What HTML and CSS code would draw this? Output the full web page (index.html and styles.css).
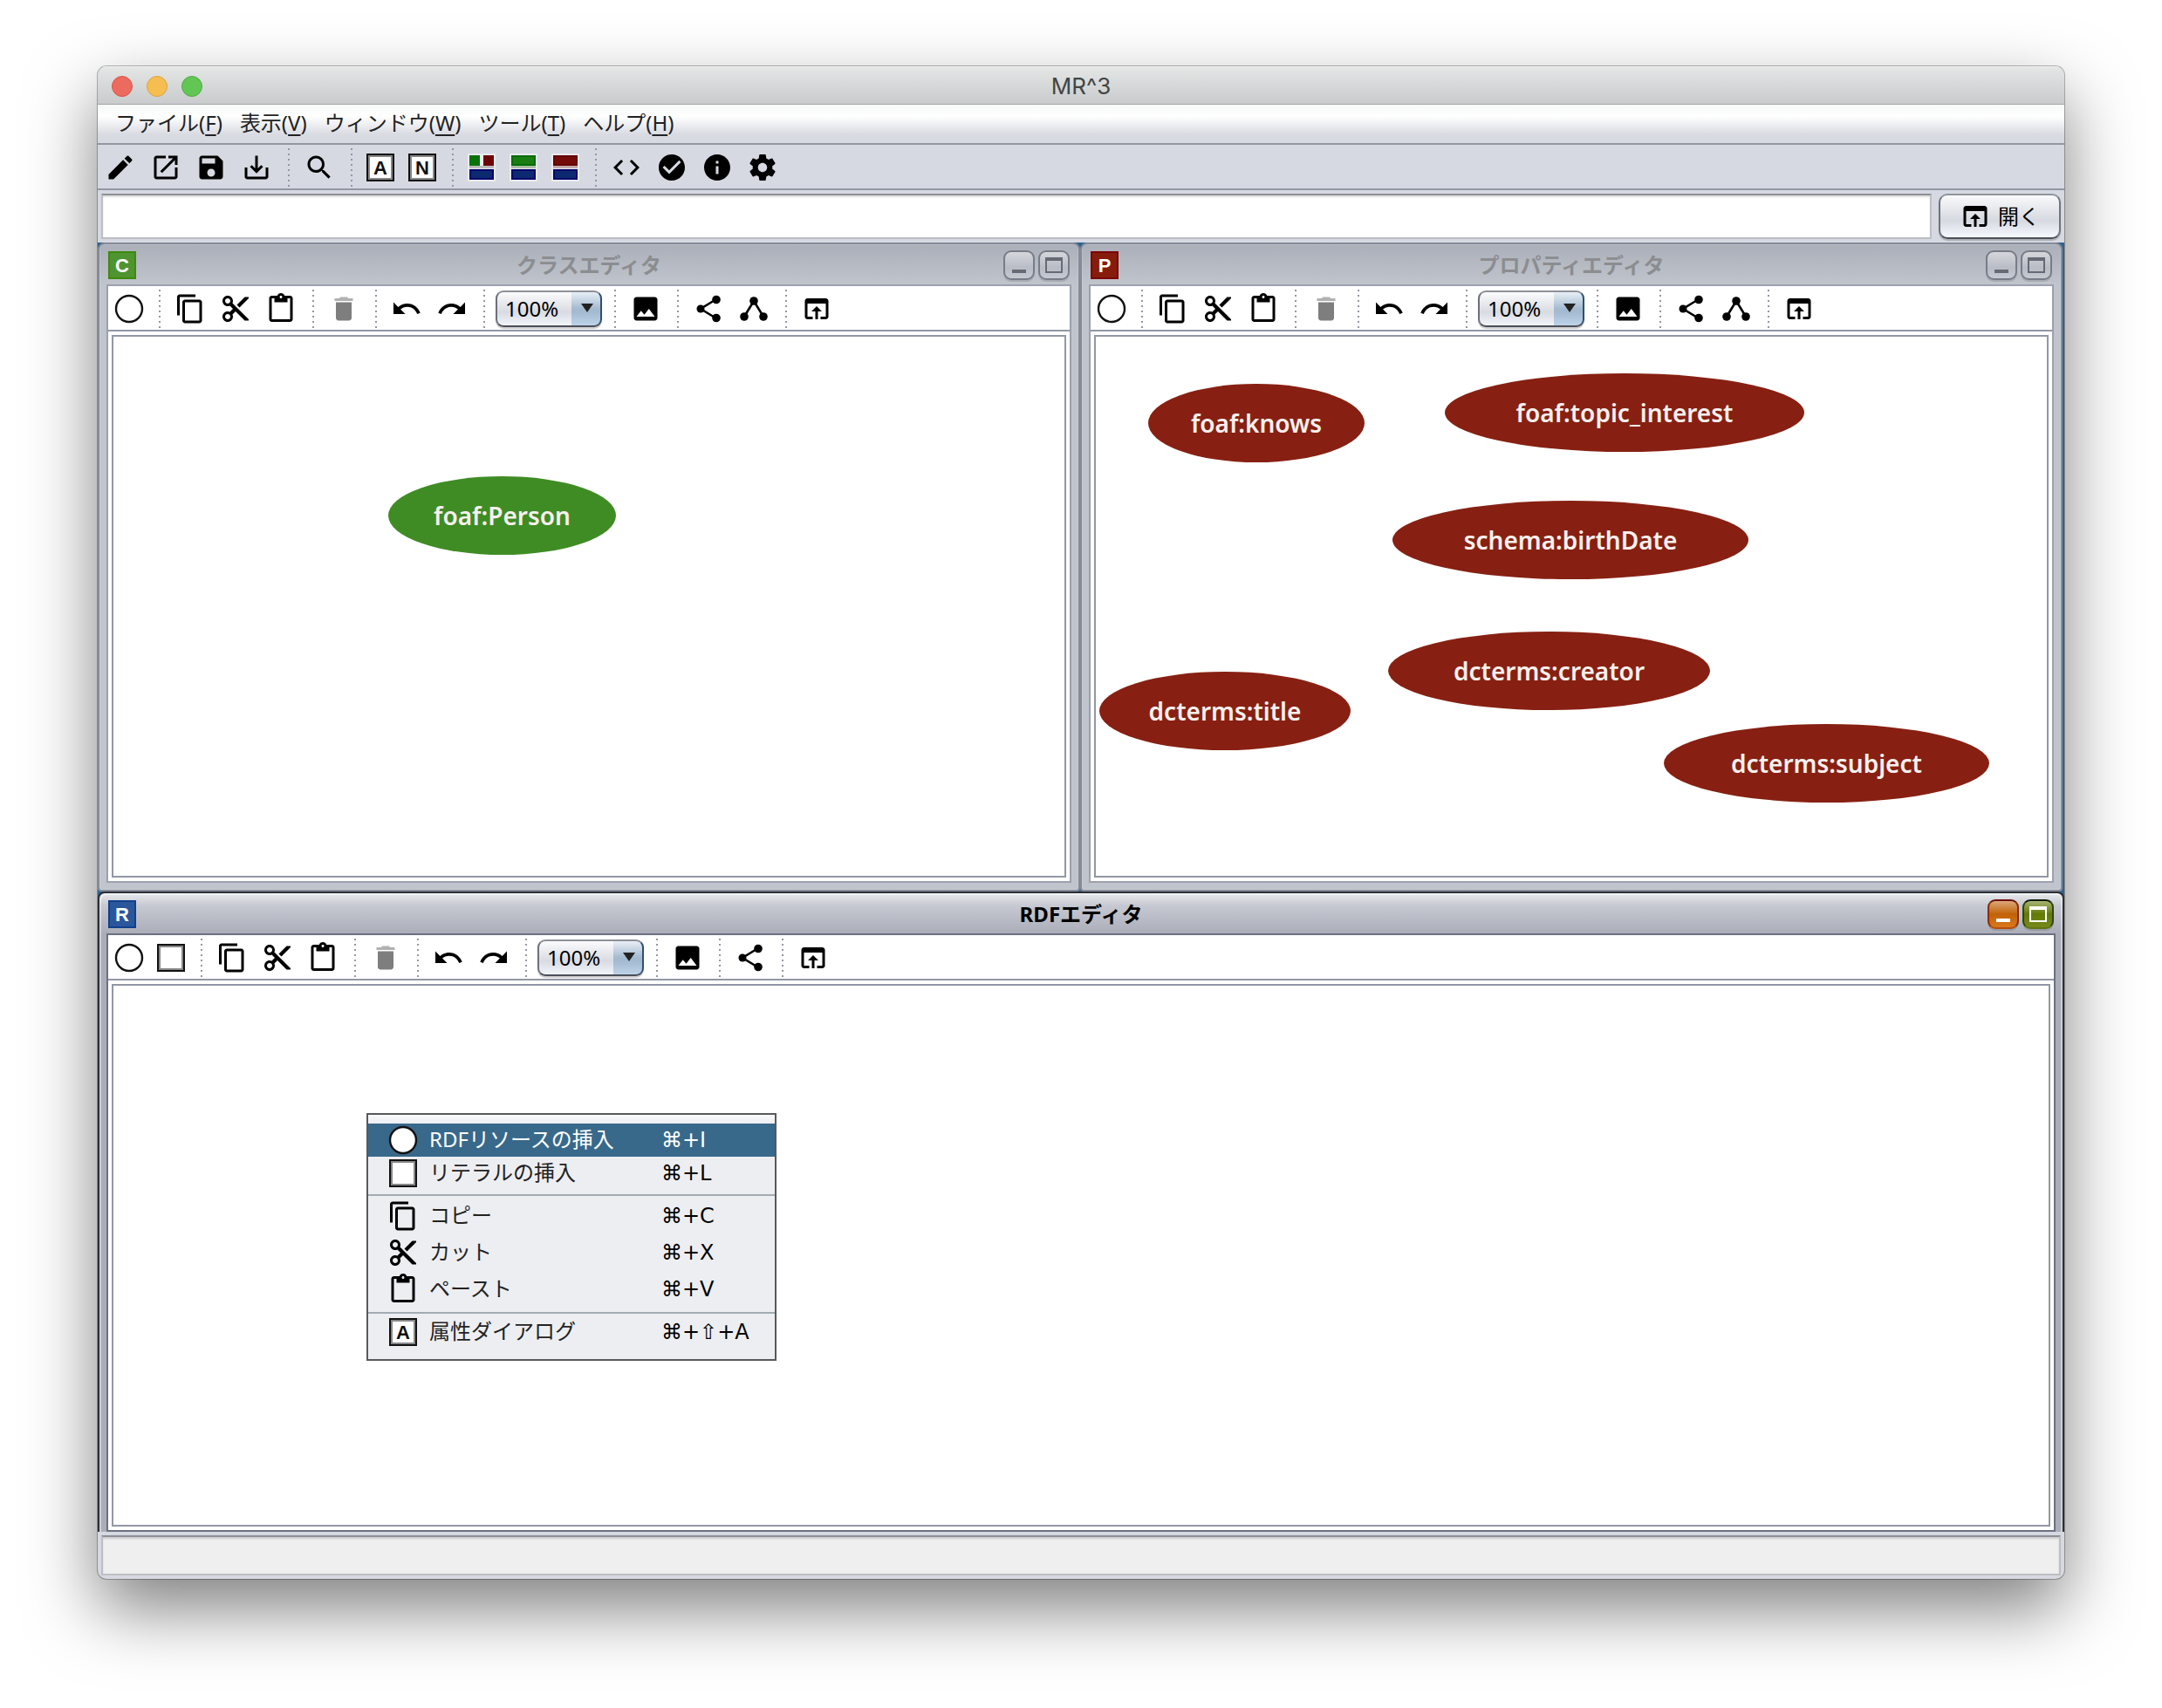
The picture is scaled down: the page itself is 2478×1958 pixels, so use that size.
FILE: index.html
```html
<!DOCTYPE html>
<html lang="ja">
<head>
<meta charset="utf-8">
<title>MR^3</title>
<link rel="stylesheet" href="styles.css">
</head>
<body>
<svg class="sprite" aria-hidden="true">
  <symbol id="edit" viewBox="0 0 24 24"><path d="M3 17.25V21h3.75L17.81 9.94l-3.75-3.75L3 17.25zM20.71 7.04c.39-.39.39-1.02 0-1.41l-2.34-2.34c-.39-.39-1.02-.39-1.41 0l-1.83 1.83 3.75 3.75 1.83-1.83z"/></symbol>
  <symbol id="open-new" viewBox="0 0 24 24"><path d="M19 19H5V5h7V3H5c-1.11 0-2 .9-2 2v14c0 1.1.89 2 2 2h14c1.1 0 2-.9 2-2v-7h-2v7zM14 3v2h3.59l-9.83 9.83 1.41 1.41L19 6.41V10h2V3h-7z"/></symbol>
  <symbol id="save" viewBox="0 0 24 24"><path d="M17 3H5c-1.11 0-2 .9-2 2v14c0 1.1.89 2 2 2h14c1.1 0 2-.9 2-2V7l-4-4zm-5 16c-1.66 0-3-1.34-3-3s1.34-3 3-3 3 1.34 3 3-1.34 3-3 3zm3-10H5V5h10v4z"/></symbol>
  <symbol id="save-as" viewBox="0 0 24 24"><path d="M19 12v7H5v-7H3v7c0 1.1.9 2 2 2h14c1.1 0 2-.9 2-2v-7h-2zm-6 .67l2.59-2.58L17 11.5l-5 5-5-5 1.41-1.41L11 12.67V3h2z"/></symbol>
  <symbol id="search" viewBox="0 0 24 24"><path d="M15.5 14h-.79l-.28-.27C15.41 12.59 16 11.11 16 9.5 16 5.91 13.09 3 9.5 3S3 5.91 3 9.5 5.91 16 9.5 16c1.61 0 3.09-.59 4.23-1.57l.27.28v.79l5 4.99L20.49 19l-4.99-5zm-6 0C7.01 14 5 11.99 5 9.5S7.01 5 9.5 5 14 7.01 14 9.5 11.99 14 9.5 14z"/></symbol>
  <symbol id="code" viewBox="0 0 24 24"><path d="M9.4 16.6L4.8 12l4.6-4.6L8 6l-6 6 6 6 1.4-1.4zm5.2 0l4.6-4.6-4.6-4.6L16 6l6 6-6 6-1.4-1.4z"/></symbol>
  <symbol id="check" viewBox="0 0 24 24"><path d="M12 2C6.48 2 2 6.48 2 12s4.48 10 10 10 10-4.48 10-10S17.52 2 12 2zm-2 15l-5-5 1.41-1.41L10 14.17l7.59-7.59L19 8l-9 9z"/></symbol>
  <symbol id="info" viewBox="0 0 24 24"><path d="M12 2C6.48 2 2 6.48 2 12s4.48 10 10 10 10-4.48 10-10S17.52 2 12 2zm1 15h-2v-6h2v6zm0-8h-2V7h2v2z"/></symbol>
  <symbol id="settings" viewBox="0 0 24 24"><path d="M19.43 12.98c.04-.32.07-.64.07-.98s-.03-.66-.07-.98l2.11-1.65c.19-.15.24-.42.12-.64l-2-3.46c-.12-.22-.39-.3-.61-.22l-2.49 1c-.52-.4-1.08-.73-1.69-.98l-.38-2.65C14.46 2.18 14.25 2 14 2h-4c-.25 0-.46.18-.49.42l-.38 2.65c-.61.25-1.17.59-1.69.98l-2.49-1c-.23-.09-.49 0-.61.22l-2 3.46c-.13.22-.07.49.12.64l2.11 1.65c-.04.32-.07.65-.07.98s.03.66.07.98l-2.11 1.65c-.19.15-.24.42-.12.64l2 3.46c.12.22.39.3.61.22l2.49-1c.52.4 1.08.73 1.69.98l.38 2.65c.03.24.24.42.49.42h4c.25 0 .46-.18.49-.42l.38-2.65c.61-.25 1.17-.59 1.69-.98l2.49 1c.23.09.49 0 .61-.22l2-3.46c.12-.22.07-.49-.12-.64l-2.11-1.65zM12 15.5c-1.93 0-3.5-1.57-3.5-3.5s1.57-3.5 3.5-3.5 3.5 1.57 3.5 3.5-1.57 3.5-3.5 3.5z"/></symbol>
  <symbol id="copy" viewBox="0 0 24 24"><path d="M16 1H4c-1.1 0-2 .9-2 2v14h2V3h12V1zm3 4H8c-1.1 0-2 .9-2 2v14c0 1.1.9 2 2 2h11c1.1 0 2-.9 2-2V7c0-1.1-.9-2-2-2zm0 16H8V7h11v14z"/></symbol>
  <symbol id="cut" viewBox="0 0 24 24"><path d="M9.64 7.64c.23-.5.36-1.05.36-1.64 0-2.21-1.79-4-4-4S2 3.79 2 6s1.79 4 4 4c.59 0 1.14-.13 1.64-.36L10 12l-2.36 2.36C7.14 14.13 6.59 14 6 14c-2.21 0-4 1.79-4 4s1.79 4 4 4 4-1.79 4-4c0-.59-.13-1.14-.36-1.64L12 14l7 7h3v-1L9.64 7.64zM6 8c-1.1 0-2-.89-2-2s.9-2 2-2 2 .89 2 2-.9 2-2 2zm0 12c-1.1 0-2-.89-2-2s.9-2 2-2 2 .89 2 2-.9 2-2 2zM19 3l-6 6 2 2 7-7V3z"/></symbol>
  <symbol id="paste" viewBox="0 0 24 24"><path d="M19 2h-4.18C14.4.84 13.3 0 12 0c-1.3 0-2.4.84-2.82 2H5c-1.1 0-2 .9-2 2v16c0 1.1.9 2 2 2h14c1.1 0 2-.9 2-2V4c0-1.1-.9-2-2-2zm-7 0c.55 0 1 .45 1 1s-.45 1-1 1-1-.45-1-1 .45-1 1-1zm7 18H5V4h2v3h10V4h2v16z"/></symbol>
  <symbol id="delete" viewBox="0 0 24 24"><path d="M6 19c0 1.1.9 2 2 2h8c1.1 0 2-.9 2-2V7H6v12z"/><path opacity=".6" d="M19 4h-3.5l-1-1h-5l-1 1H5v2h14V4z"/></symbol>
  <symbol id="undo" viewBox="0 0 24 24"><path d="M12.5 8c-2.65 0-5.05.99-6.9 2.6L2 7v9h9l-3.62-3.62c1.39-1.16 3.16-1.88 5.12-1.88 3.54 0 6.55 2.31 7.6 5.5l2.37-.78C21.08 11.03 17.15 8 12.5 8z"/></symbol>
  <symbol id="redo" viewBox="0 0 24 24"><path d="M18.4 10.6C16.55 8.99 14.15 8 11.5 8c-4.65 0-8.58 3.03-9.96 7.22L3.9 16c1.05-3.19 4.05-5.5 7.6-5.5 1.95 0 3.73.72 5.12 1.88L13 16h9V7l-3.6 3.6z"/></symbol>
  <symbol id="image" viewBox="0 0 24 24"><path d="M21 19V5c0-1.1-.9-2-2-2H5c-1.1 0-2 .9-2 2v14c0 1.1.9 2 2 2h14c1.1 0 2-.9 2-2zM8.5 13.5l2.5 3.01L14.5 12l4.5 6H5l3.5-4.5z"/></symbol>
  <symbol id="browser" viewBox="0 0 24 24"><path d="M19 4H5c-1.11 0-2 .9-2 2v12c0 1.1.89 2 2 2h4v-2H5V8h14v10h-4v2h4c1.1 0 2-.9 2-2V6c0-1.1-.89-2-2-2zm-7 6l-4 4h3v6h2v-6h3l-4-4z"/></symbol>
  <symbol id="share" viewBox="0 0 36 36"><path d="M27 7L9 18l18 11" fill="none" stroke="#000" stroke-width="2.6"/><circle cx="9" cy="18" r="4.5"/><circle cx="27" cy="7.5" r="4.8"/><circle cx="27" cy="28.5" r="4.8"/></symbol>
  <symbol id="tree" viewBox="0 0 36 36"><path d="M7 27L18 9l11 18" fill="none" stroke="#000" stroke-width="2.6"/><circle cx="18" cy="9" r="4.8"/><circle cx="7" cy="27" r="4.8"/><circle cx="29" cy="27" r="4.8"/></symbol>
  <symbol id="circle" viewBox="0 0 36 36"><circle cx="18" cy="18" r="15" fill="#fff" stroke="#111" stroke-width="2.4"/></symbol>
  <symbol id="square" viewBox="0 0 36 36"><path d="M3 3h30v30H3z" fill="#fff" stroke="#111" stroke-width="2"/><path d="M5 5h26v26H5z" fill="none" stroke="#888" stroke-width="2"/></symbol>
  <symbol id="panes3" viewBox="0 0 36 36"><path d="M2 2h32v32H2z" fill="#e9ebf0"/><path d="M4 4h12v12H4z" fill="#0a720a"/><path d="M20 4h12v12H20z" fill="#6c0404"/><path d="M4 20h28v12H4z" fill="#03036c"/><path d="M6 22h24v8H6z" fill="#0c2a70"/><path d="M4 16h28v3H4z" fill="#bbb"/></symbol>
  <symbol id="panes-green" viewBox="0 0 36 36"><path d="M2 2h32v32H2z" fill="#e9ebf0"/><path d="M4 4h28v12H4z" fill="#056c05"/><path d="M6 6h24v8H6z" fill="#1a7d12"/><path d="M4 16h28v3H4z" fill="#a9bda4"/><path d="M4 20h28v12H4z" fill="#03036c"/><path d="M6 22h24v8H6z" fill="#0c2a70"/></symbol>
  <symbol id="panes-red" viewBox="0 0 36 36"><path d="M2 2h32v32H2z" fill="#e9ebf0"/><path d="M4 4h28v12H4z" fill="#640000"/><path d="M6 6h24v8H6z" fill="#740b08"/><path d="M4 16h28v3H4z" fill="#c3abab"/><path d="M4 20h28v12H4z" fill="#03036c"/><path d="M6 22h24v8H6z" fill="#0c2a70"/></symbol>
  <symbol id="minimize" viewBox="0 0 32 30"><path d="M8 20h16v4H8z"/></symbol>
  <symbol id="maximize" viewBox="0 0 32 30"><path fill-rule="evenodd" d="M6 6h20v18H6zM8 10v12h16V10z"/></symbol>
</svg>

<main class="window">
  <header class="titlebar">
    <div class="lights">
      <button class="light red" aria-label="閉じる"></button>
      <button class="light yellow" aria-label="しまう"></button>
      <button class="light green" aria-label="拡大"></button>
    </div>
    <h1 class="app-title">MR^3</h1>
  </header>

  <nav class="menubar">
    <button class="menu">ファイル(<u>F</u>)</button>
    <button class="menu">表示(<u>V</u>)</button>
    <button class="menu">ウィンドウ(<u>W</u>)</button>
    <button class="menu">ツール(<u>T</u>)</button>
    <button class="menu">ヘルプ(<u>H</u>)</button>
  </nav>

  <div class="toolbar main-tools">
    <button class="tool" aria-label="新規"><svg class="icon"><use href="#edit"/></svg></button>
    <button class="tool" aria-label="開く"><svg class="icon"><use href="#open-new"/></svg></button>
    <button class="tool" aria-label="保存"><svg class="icon"><use href="#save"/></svg></button>
    <button class="tool" aria-label="別名で保存"><svg class="icon"><use href="#save-as"/></svg></button>
    <span class="sep"></span>
    <button class="tool" aria-label="検索"><svg class="icon"><use href="#search"/></svg></button>
    <span class="sep"></span>
    <button class="tool narrow"><span class="letter plain">A</span></button>
    <button class="tool narrow"><span class="letter plain">N</span></button>
    <span class="sep"></span>
    <button class="tool narrow" aria-label="全エディタ"><svg class="icon"><use href="#panes3"/></svg></button>
    <button class="tool narrow" aria-label="クラスとRDF"><svg class="icon"><use href="#panes-green"/></svg></button>
    <button class="tool narrow" aria-label="プロパティとRDF"><svg class="icon"><use href="#panes-red"/></svg></button>
    <span class="sep"></span>
    <button class="tool" aria-label="ソース"><svg class="icon"><use href="#code"/></svg></button>
    <button class="tool" aria-label="検証"><svg class="icon"><use href="#check"/></svg></button>
    <button class="tool" aria-label="情報"><svg class="icon"><use href="#info"/></svg></button>
    <button class="tool" aria-label="設定"><svg class="icon"><use href="#settings"/></svg></button>
  </div>

  <form class="address">
    <input class="address-field" type="text" aria-label="アドレス">
    <button class="open-button" type="button"><svg class="icon"><use href="#browser"/></svg>開く</button>
  </form>

  <div class="desktop">
    <div class="upper">
      <section class="frame">
        <header class="frame-title">
          <span class="letter class-badge">C</span>
          <h2 class="frame-name">クラスエディタ</h2>
          <div class="frame-buttons">
            <button class="frame-button" aria-label="最小化"><svg class="mark-icon"><use href="#minimize"/></svg></button>
            <button class="frame-button" aria-label="最大化"><svg class="mark-icon"><use href="#maximize"/></svg></button>
          </div>
        </header>
        <div class="content">
          <div class="toolbar">
            <button class="tool narrow" aria-label="クラスの挿入"><svg class="icon"><use href="#circle"/></svg></button>
            <span class="sep"></span>
            <button class="tool" aria-label="コピー"><svg class="icon"><use href="#copy"/></svg></button>
            <button class="tool" aria-label="カット"><svg class="icon"><use href="#cut"/></svg></button>
            <button class="tool" aria-label="ペースト"><svg class="icon"><use href="#paste"/></svg></button>
            <span class="sep"></span>
            <button class="tool" aria-label="削除" disabled><svg class="icon"><use href="#delete"/></svg></button>
            <span class="sep"></span>
            <button class="tool" aria-label="元に戻す"><svg class="icon"><use href="#undo"/></svg></button>
            <button class="tool" aria-label="やり直す"><svg class="icon"><use href="#redo"/></svg></button>
            <span class="sep"></span>
            <label class="zoom"><select class="zoom-select" aria-label="倍率"><option>100%</option></select></label>
            <span class="sep"></span>
            <button class="tool" aria-label="画像"><svg class="icon"><use href="#image"/></svg></button>
            <span class="sep"></span>
            <button class="tool" aria-label="横配置"><svg class="icon"><use href="#share"/></svg></button>
            <button class="tool" aria-label="縦配置"><svg class="icon"><use href="#tree"/></svg></button>
            <span class="sep"></span>
            <button class="tool" aria-label="ブラウザで開く"><svg class="icon"><use href="#browser"/></svg></button>
          </div>
          <div class="canvas">
            <div class="node class-node person">foaf:Person</div>
          </div>
        </div>
      </section>

      <section class="frame">
        <header class="frame-title">
          <span class="letter property-badge">P</span>
          <h2 class="frame-name">プロパティエディタ</h2>
          <div class="frame-buttons">
            <button class="frame-button" aria-label="最小化"><svg class="mark-icon"><use href="#minimize"/></svg></button>
            <button class="frame-button" aria-label="最大化"><svg class="mark-icon"><use href="#maximize"/></svg></button>
          </div>
        </header>
        <div class="content">
          <div class="toolbar">
            <button class="tool narrow" aria-label="プロパティの挿入"><svg class="icon"><use href="#circle"/></svg></button>
            <span class="sep"></span>
            <button class="tool" aria-label="コピー"><svg class="icon"><use href="#copy"/></svg></button>
            <button class="tool" aria-label="カット"><svg class="icon"><use href="#cut"/></svg></button>
            <button class="tool" aria-label="ペースト"><svg class="icon"><use href="#paste"/></svg></button>
            <span class="sep"></span>
            <button class="tool" aria-label="削除" disabled><svg class="icon"><use href="#delete"/></svg></button>
            <span class="sep"></span>
            <button class="tool" aria-label="元に戻す"><svg class="icon"><use href="#undo"/></svg></button>
            <button class="tool" aria-label="やり直す"><svg class="icon"><use href="#redo"/></svg></button>
            <span class="sep"></span>
            <label class="zoom"><select class="zoom-select" aria-label="倍率"><option>100%</option></select></label>
            <span class="sep"></span>
            <button class="tool" aria-label="画像"><svg class="icon"><use href="#image"/></svg></button>
            <span class="sep"></span>
            <button class="tool" aria-label="横配置"><svg class="icon"><use href="#share"/></svg></button>
            <button class="tool" aria-label="縦配置"><svg class="icon"><use href="#tree"/></svg></button>
            <span class="sep"></span>
            <button class="tool" aria-label="ブラウザで開く"><svg class="icon"><use href="#browser"/></svg></button>
          </div>
          <div class="canvas">
            <div class="node property-node knows">foaf:knows</div>
            <div class="node property-node topic">foaf:topic_interest</div>
            <div class="node property-node birth">schema:birthDate</div>
            <div class="node property-node creator">dcterms:creator</div>
            <div class="node property-node title">dcterms:title</div>
            <div class="node property-node subject">dcterms:subject</div>
          </div>
        </div>
      </section>
    </div>

    <section class="frame active">
      <header class="frame-title">
        <span class="letter rdf-badge">R</span>
        <h2 class="frame-name">RDFエディタ</h2>
        <div class="frame-buttons">
          <button class="frame-button orange" aria-label="最小化"><svg class="mark-icon"><use href="#minimize"/></svg></button>
          <button class="frame-button olive" aria-label="最大化"><svg class="mark-icon"><use href="#maximize"/></svg></button>
        </div>
      </header>
      <div class="content">
        <div class="toolbar">
          <button class="tool narrow" aria-label="リソースの挿入"><svg class="icon"><use href="#circle"/></svg></button>
          <button class="tool narrow" aria-label="リテラルの挿入"><svg class="icon"><use href="#square"/></svg></button>
          <span class="sep"></span>
          <button class="tool" aria-label="コピー"><svg class="icon"><use href="#copy"/></svg></button>
          <button class="tool" aria-label="カット"><svg class="icon"><use href="#cut"/></svg></button>
          <button class="tool" aria-label="ペースト"><svg class="icon"><use href="#paste"/></svg></button>
          <span class="sep"></span>
          <button class="tool" aria-label="削除" disabled><svg class="icon"><use href="#delete"/></svg></button>
          <span class="sep"></span>
          <button class="tool" aria-label="元に戻す"><svg class="icon"><use href="#undo"/></svg></button>
          <button class="tool" aria-label="やり直す"><svg class="icon"><use href="#redo"/></svg></button>
          <span class="sep"></span>
          <label class="zoom"><select class="zoom-select" aria-label="倍率"><option>100%</option></select></label>
          <span class="sep"></span>
          <button class="tool" aria-label="画像"><svg class="icon"><use href="#image"/></svg></button>
          <span class="sep"></span>
          <button class="tool" aria-label="横配置"><svg class="icon"><use href="#share"/></svg></button>
          <span class="sep"></span>
          <button class="tool" aria-label="ブラウザで開く"><svg class="icon"><use href="#browser"/></svg></button>
        </div>
        <div class="canvas">
          <div class="popup" role="menu">
            <button class="item selected" role="menuitem"><svg class="icon"><use href="#circle"/></svg><span class="item-name">RDFリソースの挿入</span><kbd class="keys">⌘+I</kbd></button>
            <button class="item" role="menuitem"><svg class="icon"><use href="#square"/></svg><span class="item-name">リテラルの挿入</span><kbd class="keys">⌘+L</kbd></button>
            <hr class="rule">
            <button class="item tall" role="menuitem"><svg class="icon"><use href="#copy"/></svg><span class="item-name">コピー</span><kbd class="keys">⌘+C</kbd></button>
            <button class="item tall" role="menuitem"><svg class="icon"><use href="#cut"/></svg><span class="item-name">カット</span><kbd class="keys">⌘+X</kbd></button>
            <button class="item tall" role="menuitem"><svg class="icon"><use href="#paste"/></svg><span class="item-name">ペースト</span><kbd class="keys">⌘+V</kbd></button>
            <hr class="rule">
            <button class="item" role="menuitem"><span class="letter plain">A</span><span class="item-name">属性ダイアログ</span><kbd class="keys">⌘+⇧+A</kbd></button>
          </div>
        </div>
      </div>
    </section>
  </div>

  <footer class="status"><div class="status-field" role="status"></div></footer>
</main>
</body>
</html>
```
FILE: styles.css
```css
*, *::before, *::after { box-sizing: border-box; }

body {
  margin: 0;
  min-height: 100vh;
  padding: 76px 112px 148px;
  display: flex;
  background: #fff;
  color: #000;
  font: 24px/32px "Noto Sans", "Noto Sans CJK JP", sans-serif;
}

button, input, select, kbd { font: inherit; color: inherit; }
button { margin: 0; padding: 0; border: 0; background: none; }

.sprite { position: absolute; width: 0; height: 0; }

.window {
  flex: 1;
  min-width: 0;
  display: flex;
  flex-direction: column;
  overflow: hidden;
  border-radius: 10px;
  background: #d6d9e1;
  box-shadow: 0 0 0 1px rgba(0, 0, 0, .28), 0 34px 80px rgba(0, 0, 0, .5);
}

/* title bar */
.titlebar {
  height: 44px;
  padding: 2px 16px 0;
  display: grid;
  grid-template-columns: 1fr auto 1fr;
  align-items: center;
  border-bottom: 1px solid #a3a5a6;
  background: linear-gradient(#e4e7e6, #c9cbcc);
  box-shadow: inset 0 1px #f2f4f3;
}
.lights { display: flex; gap: 16px; }
.light { width: 24px; height: 24px; border: 1px solid; border-radius: 50%; }
.red { background: #ed6a5f; border-color: #d8554a; }
.yellow { background: #f6be50; border-color: #dba43c; }
.green { background: #62c655; border-color: #50ac43; }
.app-title { margin: 0; font: 26px/32px Inter, sans-serif; color: #444; }

/* menu bar */
.menubar {
  height: 46px;
  padding: 0 20px 2px;
  display: flex;
  align-items: center;
  gap: 20px;
  border-bottom: 2px solid #9297a1;
  background: linear-gradient(#f5f9f7, #fff 30%, #d9dbe2 78%, #d6d9e1);
}
.menu { color: #222; white-space: nowrap; }
.menu u { text-underline-offset: 4px; text-decoration-thickness: 2px; }

/* toolbars */
.toolbar {
  height: 52px;
  padding-top: 2px;
  display: flex;
  align-items: center;
  border-bottom: 2px solid #9297a5;
  background: #fff;
}
.main-tools { background: #d6d9e1; }
.tool { width: 52px; height: 48px; display: grid; place-items: center; }
.tool.narrow { width: 48px; }
.tool:disabled { opacity: .5; }
.icon { width: 36px; height: 36px; display: block; }
.sep {
  width: 20px;
  height: 44px;
  background: repeating-linear-gradient(#9297a5 0 2px, transparent 2px 6px) 10px 0 / 2px 100% no-repeat;
}

.letter {
  width: 32px;
  height: 32px;
  padding-top: 2px;
  display: grid;
  place-items: center;
  font: bold 22px/26px "Liberation Sans", sans-serif;
  color: #fff;
}
.plain { border: 2px solid #111; background: #fff; color: #111; box-shadow: inset 0 0 0 2px #888; }
.class-badge { border: 2px solid #3d8a0d; background: #4f9430; }
.property-badge { border: 2px solid #7a0606; background: #861c0c; }
.rdf-badge { border: 2px solid #123f8c; background: #2a579b; }

.zoom { position: relative; margin: 0 4px; display: block; }
.zoom::after {
  content: "";
  position: absolute;
  top: 15px;
  right: 10px;
  width: 14px;
  height: 10px;
  background: #222;
  clip-path: polygon(0 0, 100% 0, 50% 100%);
  pointer-events: none;
}
.zoom-select {
  appearance: none;
  width: 122px;
  height: 42px;
  padding: 0 0 0 9px;
  display: block;
  border: 2px solid;
  border-color: #8e9099 #2f4f70 #4c4f5a #6d6f7a;
  border-radius: 9px;
  background:
    linear-gradient(#e8eff5, #a3bad0 50%, #a3bad0 60%, #bdd3e8) right / 33px 100% no-repeat,
    linear-gradient(#fbfbfc, #d9dbe2 60%, #f2f4fb);
  box-shadow: 0 2px 1px rgba(0, 0, 0, .2);
}

/* address row */
.address { height: 60px; padding: 4px; display: flex; gap: 8px; }
.address-field {
  flex: 1;
  min-width: 0;
  height: 52px;
  padding: 0 8px;
  border: 2px solid #bdbfc2;
  border-top-color: #8d8f96;
  background: #fff;
  box-shadow: inset 0 2px 2px #ddd;
}
.open-button {
  width: 140px;
  height: 52px;
  display: flex;
  align-items: center;
  justify-content: center;
  gap: 8px;
  border: 2px solid;
  border-color: #8f949d #6f737c #4c4f58;
  border-radius: 10px;
  background: linear-gradient(#fafafb, #d6d9e1 60%, #f6f8ff);
  box-shadow: 0 2px 1px rgba(0, 0, 0, .2);
}

/* desktop and internal frames */
.desktop {
  flex: 1;
  display: grid;
  grid-template-rows: 744fr 734fr;
  background: #2f628f;
}
.upper { margin-right: 2px; display: grid; grid-template-columns: 1fr 1fr; }
.frame {
  min-width: 0;
  padding: 0 8px 8px;
  display: flex;
  flex-direction: column;
  border: 2px solid #868b98;
  border-radius: 8px 8px 4px 4px;
  background: linear-gradient(#abafb9, #c0c4cc 46px);
  box-shadow: inset 0 0 0 1px rgba(255, 255, 255, .15);
}
.frame.active {
  padding-bottom: 0;
  border-color: #2c2e35;
  border-bottom: 0;
  border-radius: 8px 8px 0 0;
  background: linear-gradient(#e8eaec, #c6c9d1 14px, #abaeb9 46px);
  box-shadow: inset 2px 2px rgba(255, 255, 255, .4), inset -2px 0 rgba(255, 255, 255, .4);
}
.frame-title {
  height: 46px;
  padding: 2px 2px 0;
  display: grid;
  grid-template-columns: 1fr auto 1fr;
  align-items: center;
}
.frame-name { margin: 0; font: bold 24px/32px "Noto Sans", "Noto Sans CJK JP", sans-serif; color: #8b8d90; }
.active .frame-name { color: #000; }
.frame-buttons { display: flex; justify-content: flex-end; gap: 4px; }
.frame-button {
  width: 36px;
  height: 34px;
  border: 2px solid #777c88;
  border-radius: 9px;
  background: linear-gradient(#d5d7db, #b8bcc5 60%, #c6cad2);
  box-shadow: 0 2px rgba(0, 0, 0, .12);
}
.mark-icon { width: 32px; height: 30px; display: block; fill: #666a74; }
.active .mark-icon { fill: #fff; }
.orange { border-color: #6b0f02 #8c2a04 #b54e0c; background: linear-gradient(#dba77a, #c26207 50%, #d9781b); }
.olive { border-color: #0b1a04 #33450c #5f7510; background: linear-gradient(#a8b474, #627a05 50%, #768a1c); }

.content {
  flex: 1;
  display: flex;
  flex-direction: column;
  border: 2px solid #9da1ae;
  background: #fff;
}
.active .content { border-color: #6c7180; }
.canvas { position: relative; flex: 1; margin: 4px; border: 2px solid #9297a5; background: #fff; }

/* graph nodes */
.node {
  position: absolute;
  height: 90px;
  display: grid;
  place-items: center;
  border-radius: 50%;
  color: #f6f0ee;
  font-size: 28px;
  font-weight: 600;
  line-height: 36px;
}
.class-node { background: #3f8c25; }
.property-node { background: #872012; }
.person { left: 315px; top: 160px; width: 261px; }
.knows { left: 60px; top: 54px; width: 248px; }
.topic { left: 400px; top: 42px; width: 412px; }
.birth { left: 340px; top: 188px; width: 408px; }
.creator { left: 335px; top: 338px; width: 369px; }
.title { left: 4px; top: 384px; width: 288px; }
.subject { left: 651px; top: 444px; width: 373px; }

/* context menu */
.popup {
  position: absolute;
  left: 290px;
  top: 146px;
  width: 470px;
  padding: 10px 0 12px;
  display: flex;
  flex-direction: column;
  border: 2px solid #58595c;
  background: linear-gradient(#fafafc, #edeef2 10px);
}
.item {
  height: 38px;
  padding: 0 0 0 22px;
  display: grid;
  grid-template-columns: 36px 254px 1fr;
  column-gap: 12px;
  align-items: center;
  text-align: left;
  white-space: nowrap;
  color: #222;
}
.item .letter { margin: 0 2px; text-align: center; }
.item-name { padding-bottom: 2px; }
.item.tall { height: 42px; }
.item.selected { background: #38698b; color: #fff; }
.keys { font-family: "DejaVu Sans", sans-serif; color: #000; }
.selected .keys { color: #fff; }
.rule { width: 100%; height: 2px; margin: 5px 0 2px; border: 0; background: #a3abb3; }

/* status bar */
.status { height: 54px; padding: 4px; }
.status-field {
  height: 46px;
  border: 2px solid #bdbfc2;
  border-top-color: #8d8f96;
  background: #efefef;
  box-shadow: inset 0 2px 2px #ccc;
}
```
